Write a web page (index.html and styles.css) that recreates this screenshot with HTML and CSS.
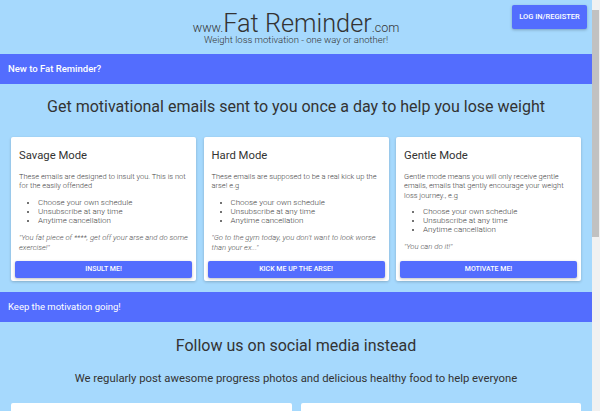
FILE: index.html
```html
<!DOCTYPE html>
<html lang="en">
<head>
<meta charset="utf-8">
<title>Fat Reminder</title>
<link rel="stylesheet" href="styles.css">
</head>
<body>
<div class="page">
  <header class="header">
    <div class="header-spacer"></div>
    <div class="brand">
      <div class="logo"><span class="logo-small">www.</span><span class="logo-main">Fat Reminder</span><span class="logo-small">.com</span></div>
      <div class="tagline">Weight loss motivation - one way or another!</div>
    </div>
    <div class="header-actions">
      <a class="btn btn-login" href="#">LOG IN/REGISTER</a>
    </div>
  </header>

  <div class="bar">New to Fat Reminder?</div>

  <section class="section">
    <h1 class="section-title">Get motivational emails sent to you once a day to help you lose weight</h1>
    <div class="cards">
      <div class="card">
        <div class="card-body">
          <h2 class="card-title">Savage Mode</h2>
          <p class="card-text">These emails are designed to insult you. This is not for the easily offended</p>
          <ul class="card-list">
            <li>Choose your own schedule</li>
            <li>Unsubscribe at any time</li>
            <li>Anytime cancellation</li>
          </ul>
          <p class="card-quote">"You fat piece of ****, get off your arse and do some exercise!"</p>
        </div>
        <div class="card-action"><a class="btn btn-block" href="#">INSULT ME!</a></div>
      </div>
      <div class="card">
        <div class="card-body">
          <h2 class="card-title">Hard Mode</h2>
          <p class="card-text">These emails are supposed to be a real kick up the arse! e.g</p>
          <ul class="card-list">
            <li>Choose your own schedule</li>
            <li>Unsubscribe at any time</li>
            <li>Anytime cancellation</li>
          </ul>
          <p class="card-quote">"Go to the gym today, you don't want to look worse than your ex..."</p>
        </div>
        <div class="card-action"><a class="btn btn-block" href="#">KICK ME UP THE ARSE!</a></div>
      </div>
      <div class="card">
        <div class="card-body">
          <h2 class="card-title">Gentle Mode</h2>
          <p class="card-text">Gentle mode means you will only receive gentle emails, emails that gently encourage your weight loss journey., e.g</p>
          <ul class="card-list">
            <li>Choose your own schedule</li>
            <li>Unsubscribe at any time</li>
            <li>Anytime cancellation</li>
          </ul>
          <p class="card-quote">"You can do it!"</p>
        </div>
        <div class="card-action"><a class="btn btn-block" href="#">MOTIVATE ME!</a></div>
      </div>
    </div>
  </section>

  <div class="bar bar-alt">Keep the motivation going!</div>

  <section class="section section-social">
    <h1 class="section-title social-title">Follow us on social media instead</h1>
    <p class="social-text">We regularly post awesome progress photos and delicious healthy food to help everyone</p>
    <div class="social-cards">
      <div class="social-card"></div>
      <div class="social-card"></div>
    </div>
  </section>
</div>
<div class="scrollbar"><div class="scrollbar-thumb"></div></div>
</body>
</html>
```

FILE: styles.css
```css
html, body {
  margin: 0;
  padding: 0;
}
body {
  background: #a6d9fd;
  font-family: Roboto, "Liberation Sans", sans-serif;
  color: #333;
  overflow: hidden;
}
.page {
  margin-right: 8px;
}
.header {
  display: grid;
  grid-template-columns: 1fr auto 1fr;
  align-items: start;
  height: 54px;
}
.brand {
  text-align: center;
  padding-top: 13px;
}
.logo {
  color: #333;
  font-size: 25.3px;
  font-weight: 300;
  line-height: 22px;
  height: 22px;
  white-space: nowrap;
}
.logo-small {
  font-size: 12.5px;
  line-height: 0;
}
.tagline {
  font-size: 9.5px;
  font-weight: 300;
  color: #333;
  line-height: 10px;
  margin-top: 0;
}
.header-actions {
  display: flex;
  justify-content: flex-end;
  padding: 5px 5px 0 0;
}
.btn {
  display: block;
  background: #536dfe;
  color: #fff;
  text-decoration: none;
  text-align: center;
  font-weight: 500;
  border-radius: 2px;
  box-shadow: 0 1px 3px rgba(0,0,0,0.25);
}
.btn-login {
  font-size: 7.5px;
  line-height: 24px;
  width: 75px;
}
.bar {
  background: #536dfe;
  color: #fff;
  font-size: 9.5px;
  line-height: 30px;
  height: 30px;
  padding-left: 8px;
  font-weight: 500;
}
.bar-alt {
  font-weight: 400;
}
.section {
  padding: 0 11px;
}
.section-title {
  margin: 0;
  text-align: center;
  font-weight: 400;
  font-size: 16px;
  line-height: 20px;
  padding: 13px 0 20px;
  color: #333;
}
.cards {
  display: grid;
  grid-template-columns: repeat(3, 1fr);
  gap: 7.5px;
  padding-bottom: 11px;
}
.card {
  background: #fff;
  border-radius: 2px;
  box-shadow: 0 1px 3px rgba(0,0,0,0.2);
  display: flex;
  flex-direction: column;
}
.card-body {
  padding: 10px 8px 0;
  flex: 1;
}
.card-title {
  margin: 0;
  font-size: 11.3px;
  font-weight: 400;
  line-height: 18px;
  color: #333;
}
.card-text {
  margin: 7px 0 0;
  font-size: 7.5px;
  font-weight: 300;
  line-height: 9.3px;
  color: #444;
}
.card-list {
  margin: 7px 0 0;
  padding-left: 19px;
  font-size: 8px;
  font-weight: 300;
  line-height: 9px;
  color: #444;
}
.card-quote {
  margin: 8px 0 0;
  font-size: 7.7px;
  font-style: italic;
  font-weight: 300;
  line-height: 10px;
  color: #555;
}
.card-action {
  padding: 8px 4px 3px;
}
.btn-block {
  font-size: 7px;
  line-height: 17px;
}
.section-social {
  padding-top: 0;
}
.social-title {
  padding: 14px 0 16px;
}
.social-text {
  margin: 0;
  text-align: center;
  font-size: 11.3px;
  line-height: 14px;
  color: #333;
}
.social-cards {
  display: grid;
  grid-template-columns: 1fr 1fr;
  gap: 9px;
  margin-top: 17px;
}
.social-card {
  background: #fff;
  height: 60px;
  border-radius: 2px;
}
.scrollbar {
  position: fixed;
  top: 0;
  right: 0;
  width: 8px;
  height: 100%;
  background: #f1f1f1;
}
.scrollbar-thumb {
  margin: 10px 1px 0 0;
  height: 227px;
  background: #c1c1c1;
}
```
